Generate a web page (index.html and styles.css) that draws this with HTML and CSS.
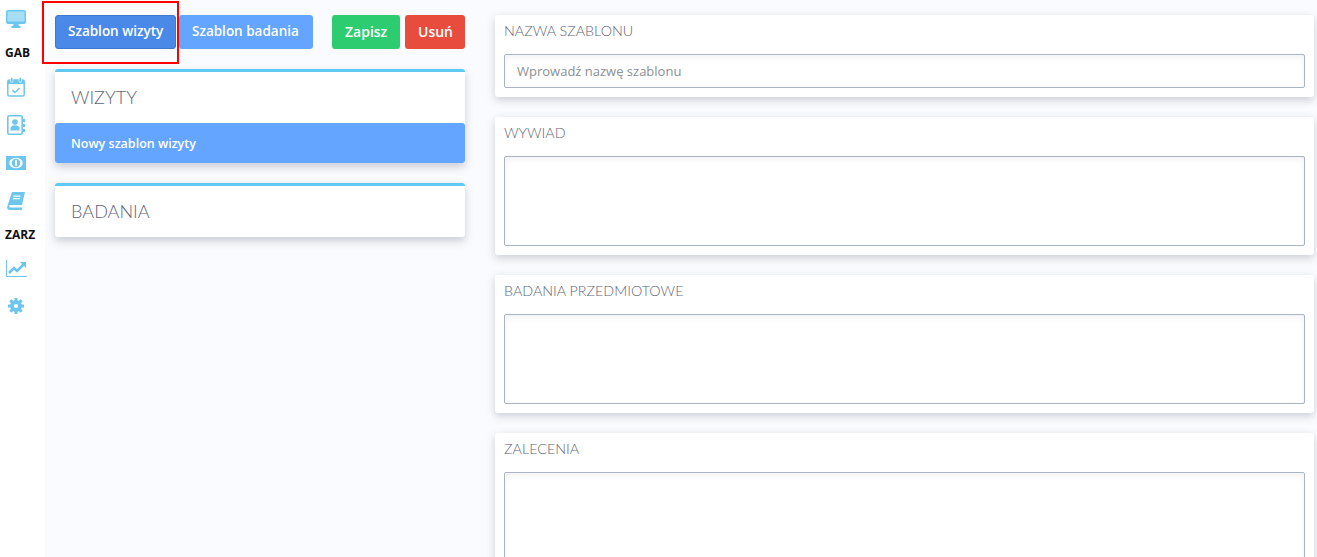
FILE: index.html
```html
<!DOCTYPE html>
<html lang="pl">
<head>
<meta charset="utf-8">
<title>Szablony</title>
<link rel="stylesheet" href="styles.css">
</head>
<body>
<div class="app">
  <nav class="side">
    <div class="nav-item"><svg width="20" height="18" viewBox="0 0 20 18"><path fill="#6cc6ee" d="M2 0h16a2 2 0 0 1 2 2v10a2 2 0 0 1-2 2h-5.500l.5 2h1.500v2h-9v-2H7l.5-2H2a2 2 0 0 1-2-2V2a2 2 0 0 1 2-2z"/><path fill="#a6def5" d="M1.500 1.500h17v10h-17z"/></svg></div>
    <div class="sec">GAB</div>
    <div class="nav-item"><svg width="18" height="20" viewBox="0 0 18 20"><rect x=".8" y="3" width="16.400" height="16" rx="1.500" fill="none" stroke="#6cc6ee" stroke-width="1.500"/><path fill="#6cc6ee" d="M1 3h16v4H1z"/><rect x="3.500" y=".5" width="2.500" height="5" rx="1.200" fill="#6cc6ee" stroke="#fff" stroke-width=".6"/><rect x="12" y=".5" width="2.500" height="5" rx="1.200" fill="#6cc6ee" stroke="#fff" stroke-width=".6"/><path fill="none" stroke="#6cc6ee" stroke-width="1.500" d="M5.500 13l2.500 2.500 4.500-4.500"/></svg></div>
    <div class="nav-item"><svg width="18" height="20" viewBox="0 0 18 20"><rect x=".8" y=".8" width="14.400" height="18.400" rx="1.500" fill="none" stroke="#6cc6ee" stroke-width="1.600"/><path fill="#6cc6ee" d="M16 4h2v3h-2zM16 9h2v3h-2zM16 14h2v3h-2z"/><circle cx="8" cy="7" r="2.800" fill="#6cc6ee"/><path fill="#6cc6ee" d="M3.500 15.500v-2c0-2 2-3.200 4.500-3.200s4.500 1.200 4.500 3.200v2z"/></svg></div>
    <div class="nav-item"><svg width="20" height="14" viewBox="0 0 20 14"><path fill="#6cc6ee" d="M0 0h20v14H0z"/><ellipse cx="10" cy="7" rx="6.800" ry="5.200" fill="#fff"/><circle cx="10" cy="7" r="4.200" fill="#6cc6ee"/><path fill="#fff" d="M9 4.300h2v5.400H9z"/></svg></div>
    <div class="nav-item"><svg width="18" height="18" viewBox="0 0 18 18"><path fill="#6cc6ee" d="M5 0h13l-3 13H3.200c-1.300 0-1.300 2.500 0 2.500h12.300l-.6 2.500H2.500C.7 18-.2 16.300.3 14.500z"/><path fill="#fff" d="M6.500 3.500h7l-.3 1.200h-7zM6 6h7l-.3 1.200h-7z"/></svg></div>
    <div class="sec sec-tight">ZARZ</div>
    <div class="nav-item"><svg width="21" height="17" viewBox="0 0 21 17"><path fill="none" stroke="#6cc6ee" d="M.5 0v16.500H21"/><path fill="none" stroke="#6cc6ee" stroke-width="2.600" d="M3 13l5-5 3 3 7-7"/><path fill="#6cc6ee" d="M14 2h6v6z"/></svg></div>
    <div class="nav-item"><svg width="16" height="16" viewBox="0 0 16 16"><circle cx="8" cy="8" r="4" fill="none" stroke="#6cc6ee" stroke-width="3.800"/><path fill="none" stroke="#6cc6ee" stroke-width="3" d="M8 0v3M8 13v3M0 8h3M13 8h3M2.300 2.300l2.100 2.100M11.600 11.600l2.100 2.100M2.300 13.700l2.100-2.100M11.600 4.400l2.100-2.100"/></svg></div>
  </nav>
  <main class="left">
    <div class="toolbar">
      <div class="tabs">
        <span class="btn active">Szablon wizyty</span>
        <span class="btn blue">Szablon badania</span>
        <span class="highlight"></span>
      </div>
      <div class="actions">
        <span class="btn green">Zapisz</span>
        <span class="btn red">Usuń</span>
      </div>
    </div>
    <section class="panel">
      <h2>WIZYTY</h2>
      <div class="item">Nowy szablon wizyty</div>
    </section>
    <section class="panel">
      <h2>BADANIA</h2>
    </section>
  </main>
  <div class="right">
    <section class="card">
      <h3>NAZWA SZABLONU</h3>
      <input class="field" placeholder="Wprowadź nazwę szablonu">
    </section>
    <section class="card">
      <h3>WYWIAD</h3>
      <div class="area"></div>
    </section>
    <section class="card">
      <h3>BADANIA PRZEDMIOTOWE</h3>
      <div class="area"></div>
    </section>
    <section class="card">
      <h3>ZALECENIA</h3>
      <div class="area"></div>
    </section>
  </div>
</div>
</body>
</html>
```
FILE: styles.css
```css
* { box-sizing: border-box; }
html, body { margin: 0; height: 100%; overflow: hidden; }
body { background: #fafbfe; font-family: "Open Sans", sans-serif; color: #6c757d; }
.app { display: flex; height: 557px; overflow: hidden; }
.side { width: 45px; flex: none; background: #fff; display: flex; flex-direction: column; }
.nav-item { width: 32px; height: 38px; display: flex; align-items: center; justify-content: center; flex: none; }
.sec { font-size: 12px; font-weight: 700; color: #111; height: 30px; line-height: 30px; padding-left: 5px; }
.sec-tight { height: 29px; }
.left { width: 410px; margin-left: 10px; flex: none; padding-top: 15px; }
.toolbar { display: flex; justify-content: space-between; height: 34px; margin-bottom: 20px; }
.tabs { display: flex; position: relative; gap: 3px; }
.actions { display: flex; gap: 5px; }
.btn { display: flex; align-items: center; height: 34px; border-radius: 3px; color: #fff; font-size: 13.5px; font-weight: 600; padding: 0 13px 2px; white-space: nowrap; }
.active { background: #4a89e8; border: 1px solid #3f78cf; width: 121px; padding: 0 12px 2px; }
.blue { background: #63a5ff; width: 134px; }
.green { background: #2ecc71; width: 68px; font-size: 14px; }
.red { background: #e74c3c; width: 60px; font-size: 14px; }
.highlight { position: absolute; left: -13px; top: -14px; width: 137px; height: 63px; border: 2px solid #f00; pointer-events: none; }
.panel { background: #fff; border-top: 3px solid #5fc9f3; border-radius: 3px; box-shadow: 0 4px 8px rgba(60, 70, 90, .25); margin-bottom: 20px; }
.panel h2 { margin: 0; height: 51px; padding: 13px 16px 0; font-family: Lato, sans-serif; font-weight: 300; font-size: 18.100px; line-height: 24px; color: #5f6677; }
.item { background: #63a5ff; color: #fff; height: 40px; display: flex; align-items: center; padding: 0 16px; font-size: 12.500px; font-weight: 600; border-radius: 3px; }
.right { width: 819px; margin-left: 30px; flex: none; padding-top: 15px; display: flex; flex-direction: column; gap: 20px; }
.card { flex: none; background: #fff; border-radius: 3px; box-shadow: 0 3px 8px rgba(60, 70, 90, .25); padding: 0 9px 9px; }
.card h3 { margin: 0; height: 39px; padding-top: 7px; font-family: Lato, sans-serif; font-weight: 300; font-size: 14.300px; line-height: 18px; color: #5f6677; }
.field { display: block; width: 100%; height: 34px; border: 1px solid #a9b3c1; border-radius: 2px; padding: 0 12px; font-family: "Open Sans", sans-serif; font-size: 13px; box-shadow: inset 0 3px 6px rgba(0, 0, 0, .05); outline: none; }
.field::placeholder { color: #8a8f96; }
.area { height: 90px; border: 1px solid #a9b3c1; border-radius: 2px; box-shadow: inset 0 3px 6px rgba(0, 0, 0, .05); }
```
